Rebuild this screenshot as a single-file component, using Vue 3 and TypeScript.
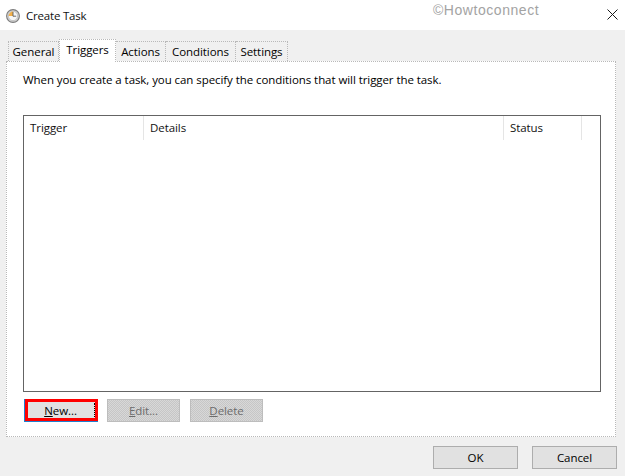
<script setup lang="ts">
const tabs: string[] = ['General', 'Triggers', 'Actions', 'Conditions', 'Settings']
const tabWidths: number[] = [51, 57, 50, 70, 52]
</script>

<template>
  <div class="win">
    <header class="titlebar">
      <svg class="clock" width="14" height="14" viewBox="0 0 14 14">
        <circle cx="7" cy="7" r="6.4" fill="#d4d4d4" stroke="#7c7c7c" stroke-width="1.1" />
        <circle cx="7" cy="7" r="4.6" fill="#f6f6f6" stroke="#a8a8a8" stroke-width="0.5" />
        <path d="M7 7V2.6A4.4 4.4 0 0 0 2.6 7Z" fill="#f2b04a" />
        <path d="M7 3v4.2h3.2" fill="none" stroke="#5a5a5a" stroke-width="0.9" />
      </svg>
      <span class="title">Create Task</span>
      <span class="mark">©Howtoconnect</span>
      <svg class="close" width="11" height="11" viewBox="0 0 11 11">
        <path d="M0.5 0.5l10 10M10.5 0.5l-10 10" stroke="#1a1a1a" stroke-width="1" fill="none" />
      </svg>
    </header>

    <main class="body">
      <nav class="tabs">
        <div
          v-for="(t, i) in tabs"
          :key="t"
          class="tab"
          :class="{ active: t === 'Triggers' }"
          :style="{ width: tabWidths[i] + 'px' }"
        >{{ t }}</div>
      </nav>

      <section class="panel">
        <p class="intro">When you create a task, you can specify the conditions that will trigger the task.</p>
        <div class="table">
          <div class="thead">
            <div class="th c1">Trigger</div>
            <div class="th c2">Details</div>
            <div class="th c3">Status</div>
            <div class="th c4"></div>
          </div>
        </div>
        <div class="actions">
          <button class="btn new"><span class="u">N</span>ew...</button>
          <button class="btn off"><span class="u">E</span>dit...</button>
          <button class="btn off"><span class="u">D</span>elete</button>
        </div>
      </section>

      <footer class="foot">
        <button class="btn main">OK</button>
        <button class="btn main">Cancel</button>
      </footer>
    </main>
  </div>
</template>

<style>
html, body { margin: 0; background: #f0f0f0; }
</style>

<style scoped>
.win {
  width: 625px;
  height: 476px;
  display: flex;
  flex-direction: column;
  overflow: hidden;
  font-family: "Open Sans", "Noto Sans", sans-serif;
  font-size: 11.5px;
  letter-spacing: -0.07px;
  color: #000;
  background: #f0f0f0;
}
.titlebar {
  height: 30px;
  flex: none;
  background: #fff;
  display: flex;
  align-items: center;
  padding-left: 6px;
  position: relative;
}
.clock { flex: none; margin-top: 1px; }
.title { margin-left: 6px; font-size: 11.5px; color: #111; letter-spacing: -0.2px; }
.mark {
  position: absolute;
  left: 433px;
  top: 2px;
  font-family: "Liberation Sans", sans-serif;
  font-size: 14px;
  letter-spacing: 0.55px;
  color: #a3a3a3;
}
.close { position: absolute; left: 607px; top: 9px; }
.body {
  flex: 1;
  display: flex;
  flex-direction: column;
  padding: 9px 0 0 6px;
}
.tabs {
  display: flex;
  height: 22px;
  align-items: flex-end;
  padding-left: 2px;
  position: relative;
  z-index: 1;
}
.tab {
  box-sizing: border-box;
  height: 20px;
  background: #f0f0f0;
  border: 1px dotted #b9b9b9;
  border-bottom: none;
  border-left: none;
  text-align: center;
  line-height: 19px;
  color: #000;
}
.tab:first-child { border-left: 1px dotted #b9b9b9; }
.tab.active {
  height: 23px;
  line-height: 20px;
  background: #fff;
  margin-bottom: -1px;
  border-left: 1px dotted #b9b9b9;
}
.panel {
  box-sizing: border-box;
  width: 610px;
  height: 376px;
  background: #fff;
  border: 1px dotted #b9b9b9;
  padding: 0 0 0 16px;
}
.intro {
  margin: 10px 0 0;
  line-height: 16px;
}
.table {
  box-sizing: border-box;
  margin-top: 27px;
  width: 578px;
  height: 277px;
  border: 1px solid #646464;
  background: #fff;
}
.thead { display: flex; height: 24px; }
.th {
  box-sizing: border-box;
  height: 24px;
  border-right: 1px solid #e5e5e5;
  padding-left: 6px;
  line-height: 24px;
  color: #111;
}
.c1 { width: 120px; }
.c2 { width: 360px; }
.c3 { width: 78px; }
.c4 { width: 18px; border-right: none; }
.actions {
  display: flex;
  align-items: flex-start;
  gap: 10px;
  margin-top: 7px;
}
.btn {
  box-sizing: border-box;
  width: 73px;
  height: 23px;
  padding: 0;
  font: inherit;
  letter-spacing: inherit;
  color: #000;
  background: #e1e1e1;
  border: 1px solid #adadad;
  display: flex;
  align-items: center;
  justify-content: center;
}
.u { text-decoration: underline; }
.btn.new {
  position: relative;
  width: 73px;
  height: 22px;
  margin-left: 2px;
  margin-right: -1px;
  padding-right: 2px;
  border: 3px solid #f00;
  box-shadow: -1px 0 0 #1f7fd0, 0 1px 0 #1f7fd0, -1px 1px 0 #1f7fd0;
}
.btn.new::after {
  content: "";
  position: absolute;
  top: 1px;
  bottom: 1px;
  right: 0;
  border-right: 1px dotted #000;
}
.btn.off {
  color: #6c6c6c;
  border: 1px solid #bdbdbd;
  background-color: #cfcfcf;
  background-image: repeating-conic-gradient(#c6c6c6 0 25%, #d8d8d8 0 50%);
  background-size: 2px 2px;
}
.foot {
  display: flex;
  gap: 14px;
  margin-top: 9px;
  padding-left: 427px;
}
.btn.main { width: 85px; border-color: #adadad; }
</style>
